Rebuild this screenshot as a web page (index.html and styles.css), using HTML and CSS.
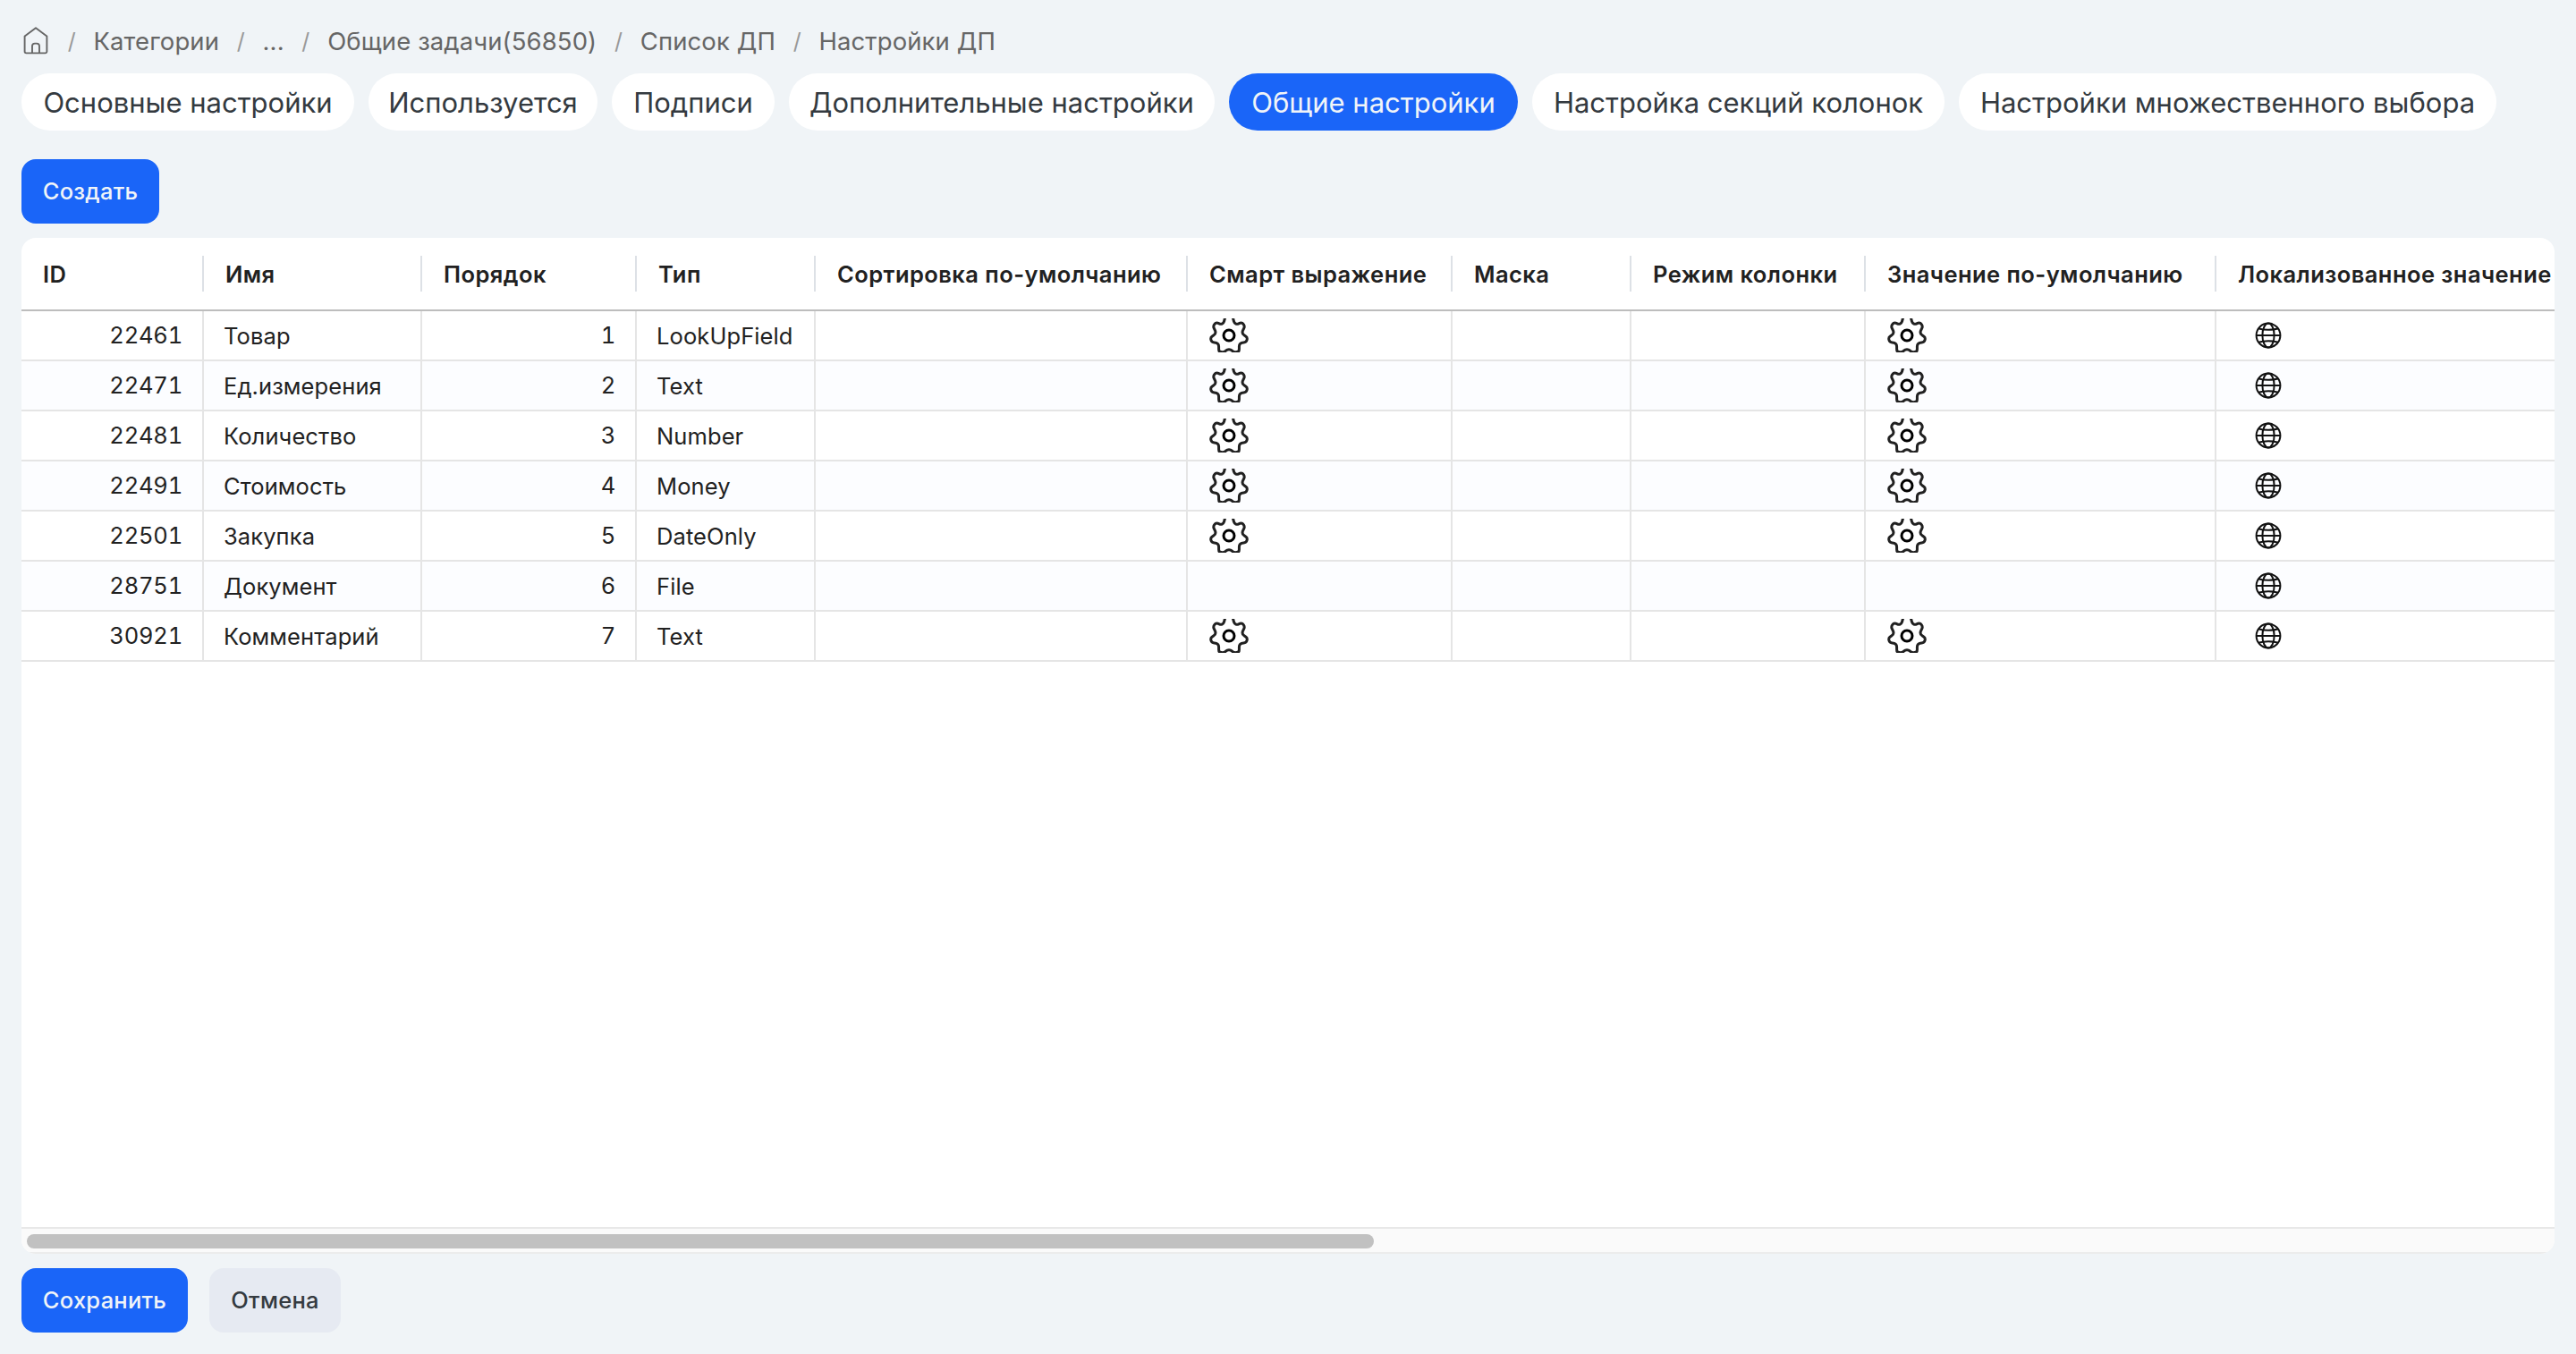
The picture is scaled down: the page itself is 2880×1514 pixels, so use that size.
FILE: index.html
```html
<!DOCTYPE html>
<html lang="ru">
<head>
    <meta charset="UTF-8">
    <meta name="viewport" content="width=device-width, initial-scale=1.0">
    <title>Настройки ДП</title>
    <link rel="stylesheet" href="styles.css">
</head>
<body>

<!-- Icons -->
<svg class="sprite" xmlns="http://www.w3.org/2000/svg">
    <symbol id="gear" viewBox="0 0 44 38">
        <path d="M22 -1.5H19.5C18 -1.5 17.6 -1 17.2 1L16.4 3.7C15.8 6 13.2 7 11.2 5.9C9 4.6 7.4 4.2 5.9 6.3C4.6 8 4.4 9.5 5.4 11.3L6.6 13.8C7.4 16 6.7 17.7 5 18.8L3 20.2C1.6 21.2 1.5 22.5 1.9 24C2.4 26.2 3.6 26.8 5.6 26.9C9.4 27.1 10.6 28.5 10.6 31.5V34.5C10.6 36.6 11.6 37.6 13.6 37.6C15.6 37.8 17 37.6 18.4 36.2C20.5 34.3 23.5 34.3 25.6 36.2C27 37.6 28.4 37.8 30.4 37.6C32.4 37.6 33.4 36.6 33.4 34.5V31.5C33.4 28.5 34.6 27.1 38.4 26.9C40.4 26.8 41.6 26.2 42.1 24C42.5 22.5 42.4 21.2 41 20.2L39 18.8C37.3 17.7 36.6 16 37.4 13.8L38.6 11.3C39.6 9.5 39.4 8 38.1 6.3C36.6 4.2 35 4.6 32.8 5.9C30.8 7 28.2 6 27.6 3.7L26.8 1C26.4 -1 26 -1.5 24.5 -1.5Z" fill="none" stroke="#212121" stroke-width="3"/>
        <circle cx="22" cy="19" r="6" fill="none" stroke="#000" stroke-width="3"/>
    </symbol>
    <symbol id="globe" viewBox="0 0 30 30">
        <g fill="none" stroke="#111" stroke-width="2">
            <circle cx="15" cy="15" r="13.4"/>
            <ellipse cx="15" cy="15" rx="6.6" ry="13.4"/>
            <path d="M1.6 15H28.4M4 7.2C10 9.3 20 9.3 26 7.2M4 22.8C10 20.7 20 20.7 26 22.8"/>
        </g>
    </symbol>
</svg>

<!-- Breadcrumbs -->
<nav class="breadcrumbs">
    <svg class="home-icon" viewBox="0 0 30 34">
        <path d="M16 3.2L28.4 12.6V29.6A1.8 1.8 0 0 1 26.6 31.4H5.4A1.8 1.8 0 0 1 3.6 29.6V12.6ZM12 31.4V23.6A3 3 0 0 1 15 20.6H17A3 3 0 0 1 20 23.6V31.4" fill="none" stroke="#666" stroke-width="1.9" stroke-linejoin="round"/>
    </svg>
    <span class="sep">/</span>
    <a>Категории</a>
    <span class="sep">/</span>
    <a>...</a>
    <span class="sep">/</span>
    <a>Общие задачи(56850)</a>
    <span class="sep">/</span>
    <a>Список ДП</a>
    <span class="sep">/</span>
    <a>Настройки ДП</a>
</nav>

<!-- Tabs -->
<div class="tabs">
    <div class="tab">Основные настройки</div>
    <div class="tab">Используется</div>
    <div class="tab">Подписи</div>
    <div class="tab">Дополнительные настройки</div>
    <div class="tab active">Общие настройки</div>
    <div class="tab">Настройка секций колонок</div>
    <div class="tab">Настройки множественного выбора</div>
</div>

<button class="btn btn-primary btn-create">Создать</button>

<!-- Table -->
<div class="grid">
    <div class="grid-header">
        <div>ID</div>
        <div>Имя</div>
        <div>Порядок</div>
        <div>Тип</div>
        <div>Сортировка по-умолчанию</div>
        <div>Смарт выражение</div>
        <div>Маска</div>
        <div>Режим колонки</div>
        <div>Значение по-умолчанию</div>
        <div>Локализованное значение</div>
    </div>
    <div class="grid-body">
        <div class="row">
            <div class="num">22461</div><div>Товар</div><div class="num">1</div><div>LookUpField</div><div></div>
            <div><svg class="gear"><use href="#gear"/></svg></div><div></div><div></div>
            <div><svg class="gear"><use href="#gear"/></svg></div><div><svg class="globe"><use href="#globe"/></svg></div>
        </div>
        <div class="row">
            <div class="num">22471</div><div>Ед.измерения</div><div class="num">2</div><div>Text</div><div></div>
            <div><svg class="gear"><use href="#gear"/></svg></div><div></div><div></div>
            <div><svg class="gear"><use href="#gear"/></svg></div><div><svg class="globe"><use href="#globe"/></svg></div>
        </div>
        <div class="row">
            <div class="num">22481</div><div>Количество</div><div class="num">3</div><div>Number</div><div></div>
            <div><svg class="gear"><use href="#gear"/></svg></div><div></div><div></div>
            <div><svg class="gear"><use href="#gear"/></svg></div><div><svg class="globe"><use href="#globe"/></svg></div>
        </div>
        <div class="row">
            <div class="num">22491</div><div>Стоимость</div><div class="num">4</div><div>Money</div><div></div>
            <div><svg class="gear"><use href="#gear"/></svg></div><div></div><div></div>
            <div><svg class="gear"><use href="#gear"/></svg></div><div><svg class="globe"><use href="#globe"/></svg></div>
        </div>
        <div class="row">
            <div class="num">22501</div><div>Закупка</div><div class="num">5</div><div>DateOnly</div><div></div>
            <div><svg class="gear"><use href="#gear"/></svg></div><div></div><div></div>
            <div><svg class="gear"><use href="#gear"/></svg></div><div><svg class="globe"><use href="#globe"/></svg></div>
        </div>
        <div class="row">
            <div class="num">28751</div><div>Документ</div><div class="num">6</div><div>File</div><div></div>
            <div></div><div></div><div></div>
            <div></div><div><svg class="globe"><use href="#globe"/></svg></div>
        </div>
        <div class="row">
            <div class="num">30921</div><div>Комментарий</div><div class="num">7</div><div>Text</div><div></div>
            <div><svg class="gear"><use href="#gear"/></svg></div><div></div><div></div>
            <div><svg class="gear"><use href="#gear"/></svg></div><div><svg class="globe"><use href="#globe"/></svg></div>
        </div>
    </div>
    <div class="scrollbar">
        <div class="thumb"></div>
    </div>
</div>

<!-- Footer buttons -->
<div class="footer">
    <button class="btn btn-primary btn-save">Сохранить</button>
    <button class="btn btn-secondary">Отмена</button>
</div>

</body>
</html>
```
FILE: styles.css
```css
* {
    box-sizing: border-box;
}
body {
    margin: 0;
    height: 1514px;
    padding: 18px 24px 24px;
    display: flex;
    flex-direction: column;
    overflow: hidden;
    background-color: #f0f4f7;
    font-family: Inter, "Liberation Sans", sans-serif;
    font-size: 25.5px;
    color: #212121;
}
.sprite {
    display: none;
}
/* Breadcrumbs */
.breadcrumbs {
    display: flex;
    align-items: center;
    height: 56px;
    font-size: 27.5px;
    letter-spacing: 0.1px;
    color: #666;
}
.home-icon {
    width: 30px;
    height: 34px;
    margin: 0 2px 2px 0;
}
.sep {
    width: 48.5px;
    text-align: center;
    font-size: 25px;
    color: #999;
}
/* Tabs */
.tabs {
    display: grid;
    grid-template-columns: 372px 256px 182px 476px 323px 461px 601px;
    gap: 16px;
    margin-top: 8px;
}
.tab {
    height: 64px;
    padding-top: 1px;
    line-height: 64px;
    border-radius: 32px;
    background-color: white;
    color: #343a40;
    font-size: 31px;
    text-align: center;
    white-space: nowrap;
}
.tab.active {
    background-color: #1a65f8;
    color: #f0f4f8;
}
/* Buttons */
.btn {
    height: 72px;
    padding: 0 0 2px;
    border: none;
    border-radius: 16px;
    font-family: inherit;
    font-size: 25.5px;
    font-weight: 500;
    letter-spacing: 0.25px;
}
.btn-primary {
    background-color: #1a65f8;
    color: #f0f4f8;
}
.btn-secondary {
    width: 147px;
    background-color: #e6eaf2;
    color: #343a40;
}
.btn-create {
    width: 154px;
    flex-shrink: 0;
    margin: 32px 0 16px;
}
.btn-save {
    width: 186px;
}
/* Table */
.grid {
    height: 1136px;
    display: flex;
    flex-direction: column;
    overflow: hidden;
    border-radius: 16px;
    background-color: white;
}
.grid-header, .row {
    display: grid;
    grid-template-columns: 204px 244px 240px 200px 416px 296px 200px 262px 392px 1fr;
}
.grid-header {
    height: 82px;
    align-items: center;
    border-bottom: 2px solid #bdbdbd;
    font-weight: 600;
    letter-spacing: 0.45px;
    white-space: nowrap;
}
.grid-header div {
    height: 40px;
    line-height: 42px;
    padding-left: 24px;
    border-right: 2px solid #dde1e6;
}
.grid-header div:last-child {
    border-right: none;
}
.grid-body {
    flex: 1;
}
.row {
    height: 56px;
    border-bottom: 2px solid #e5e5e5;
    letter-spacing: 0.1px;
}
.row:nth-child(even) {
    background-color: #fcfdff;
}
.row div {
    display: flex;
    align-items: center;
    padding: 0 22px;
    border-right: 2px solid #e5e5e5;
}
.row div:last-child {
    border-right: none;
    padding-left: 43px;
}
.row .num {
    justify-content: flex-end;
    letter-spacing: -0.2px;
    padding-bottom: 1px;
    font-variant-numeric: tabular-nums;
}
.gear {
    width: 44px;
    height: 38px;
    margin-left: 2px;
}
.globe {
    width: 30px;
    height: 30px;
}
.scrollbar {
    height: 30px;
    padding: 6px;
    border-top: 2px solid #e8e8e8;
    border-bottom: 2px solid #ececec;
    background-color: #fafafa;
}
.thumb {
    width: 1506px;
    height: 16px;
    border-radius: 8px;
    background-color: #c1c1c1;
}
/* Footer */
.footer {
    display: flex;
    gap: 24px;
    margin-top: 16px;
}
```
